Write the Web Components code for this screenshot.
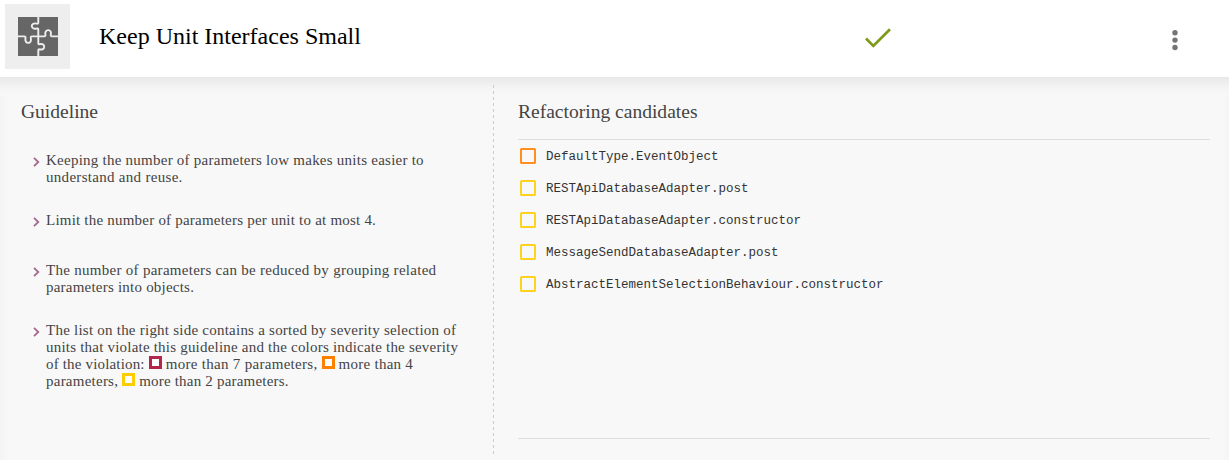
<!DOCTYPE html>
<html lang="en">
<head>
<meta charset="utf-8">
<title>Keep Unit Interfaces Small</title>
<style>
html,body{margin:0;height:460px;overflow:hidden;background:#f8f8f8}
</style>
</head>
<body>
<guideline-page></guideline-page>
<script>
const define = (name, html) => customElements.define(name, class extends HTMLElement {
  constructor() {
    super();
    const t = document.createElement('template');
    t.innerHTML = html;
    this.attachShadow({mode: 'open'}).append(t.content.cloneNode(true));
  }
});

define('puzzle-icon', `<style>
:host{display:grid;place-items:center;width:65px;height:65px;background:#eee;flex:none}
svg{display:block}
</style>
<svg width="40" height="39" viewBox="0 0 40 39">
<rect width="40" height="39" fill="#666"/>
<g fill="none" stroke="#eee" stroke-width="1.9" stroke-linejoin="round">
<path d="M20.3 0V5.2Q20.3 7 18.8 6.6C15.8 6 13.8 7 13.8 9S15.8 12.2 18.6 11.5Q20.3 11.2 20.3 12.7V26Q20.3 27.6 21.4 27.2C24.3 26.5 26.2 27.6 26.2 29.8S24.3 33 21.4 32.3Q20.3 32 20.3 33.5V39"/>
<path d="M0 19.4H6.2Q7.8 19.4 7.5 20.9C6.9 23.9 8 25.9 10.2 25.9S13.5 23.9 12.8 20.9Q12.5 19.4 14 19.4H26.2Q27.7 19.4 27.4 17.9C26.8 15 28 13.1 30.2 13.1S33.4 15 32.8 17.9Q32.5 19.4 34 19.4H40"/>
</g></svg>`);

define('check-icon', `<style>:host{display:block;width:26px;height:20px}svg{display:block}</style>
<svg width="26" height="20" viewBox="0 0 26 20"><path d="M1 10.5L8.3 17.9L25 1.2" fill="none" stroke="#7d9b1b" stroke-width="2.7"/></svg>`);

define('more-icon', `<style>:host{display:block;width:6px;height:21px}svg{display:block}</style>
<svg width="6" height="21" viewBox="0 0 6 21" fill="#757575"><circle cx="3" cy="2.7" r="2.7"/><circle cx="3" cy="10.1" r="2.7"/><circle cx="3" cy="17.5" r="2.7"/></svg>`);

define('page-header', `<style>
:host{display:flex;height:77px;background:#fff;box-sizing:border-box;padding:4px 0 0 5px}
h1{margin:16px 0 0 29px;width:766px;font:400 24px/32px "Liberation Serif",serif;color:#000;white-space:nowrap;flex:none}
check-icon{margin-top:24px}
more-icon{margin:26px 0 0 281px}
</style>
<puzzle-icon></puzzle-icon><h1><slot></slot></h1><check-icon></check-icon><more-icon></more-icon>`);

define('guideline-item', `<style>
:host{display:flex;white-space:nowrap;font:15px/17px "Liberation Serif",serif;color:#444}
svg{flex:none;width:7px;height:10px;margin:5px 6px 0 0}
</style>
<svg viewBox="0 0 7 10"><path d="M1 .8L5.3 5L1 9.2" fill="none" stroke="#a5688f" stroke-width="1.8"/></svg><div><slot></slot></div>`);

define('severity-mark', `<style>
:host{display:inline-block;box-sizing:border-box;width:13px;height:13px;border:3px solid var(--c);background:#fff;vertical-align:baseline}
</style>`);

define('candidate-row', `<style>
:host{display:flex;align-items:center;height:32px;font:12.5px/16px "Liberation Mono",monospace;color:#333;white-space:nowrap}
i{box-sizing:border-box;width:16px;height:16px;border:2px solid var(--c);border-radius:1.5px;margin:0 10px 0 2px;opacity:.88}
span{padding-top:2px}
</style><i></i><span><slot></slot></span>`);

define('guideline-page', `<style>
:host{display:block;width:1229px;height:460px;background:#f8f8f8}
main{display:flex;height:383px;box-sizing:border-box;padding-top:8px;
 background:linear-gradient(#e8e8e8,#efefef 6px,#f4f4f4 11px,#f8f8f8 19px,rgba(248,248,248,0) 19px),linear-gradient(90deg,#f4f4f4,#f8f8f8 8px,#f8f8f8 1221px,#f5f5f5)}
h2{margin:0;font:400 19.55px/24px "Liberation Serif",serif;color:#444;white-space:nowrap}
.left{width:472px;height:355px;padding:15px 0 0 21px;flex:none}
.line{width:1px;height:371px;background:repeating-linear-gradient(#ccc 0 3px,transparent 3px 6px);flex:none}
.items{padding:28px 0 0 12px}
guideline-item{height:34px}
.right{width:692px;padding:15px 0 0 24px}
.list{margin-top:15px;height:298px;border-top:1px solid #ddd;border-bottom:1px solid #ddd}
</style>
<page-header>Keep Unit Interfaces Small</page-header>
<main>
<section class="left"><h2>Guideline</h2>
<div class="items">
<guideline-item style="margin-bottom:26px"><span style="letter-spacing:.245px">Keeping the number of parameters low makes units easier to</span><br><span style="letter-spacing:.3px">understand and reuse.</span></guideline-item>
<guideline-item style="height:17px;margin-bottom:33px;letter-spacing:.215px">Limit the number of parameters per unit to at most 4.</guideline-item>
<guideline-item style="margin-bottom:26px"><span style="letter-spacing:.285px">The number of parameters can be reduced by grouping related</span><br><span style="letter-spacing:.22px">parameters into objects.</span></guideline-item>
<guideline-item><span style="letter-spacing:.235px">The list on the right side contains a sorted by severity selection of</span><br><span style="letter-spacing:.21px">units that violate this guideline and the colors indicate the severity</span><br><span style="letter-spacing:.17px">of the violation: </span><severity-mark style="--c:#b22749"></severity-mark><span style="letter-spacing:.3px"> more than 7 parameters, </span><severity-mark style="--c:#ff8000"></severity-mark><span style="letter-spacing:.26px"> more than 4</span><br><span style="letter-spacing:.24px">parameters, </span><severity-mark style="--c:#fc0"></severity-mark><span style="letter-spacing:.2px"> more than 2 parameters.</span></guideline-item>
</div></section>
<div class="line"></div>
<section class="right"><h2>Refactoring candidates</h2>
<div class="list">
<candidate-row style="--c:#ff8000">DefaultType.EventObject</candidate-row>
<candidate-row style="--c:#fc0">RESTApiDatabaseAdapter.post</candidate-row>
<candidate-row style="--c:#fc0">RESTApiDatabaseAdapter.constructor</candidate-row>
<candidate-row style="--c:#fc0">MessageSendDatabaseAdapter.post</candidate-row>
<candidate-row style="--c:#fc0">AbstractElementSelectionBehaviour.constructor</candidate-row>
</div></section>
</main>`);
</script>
</body>
</html>
